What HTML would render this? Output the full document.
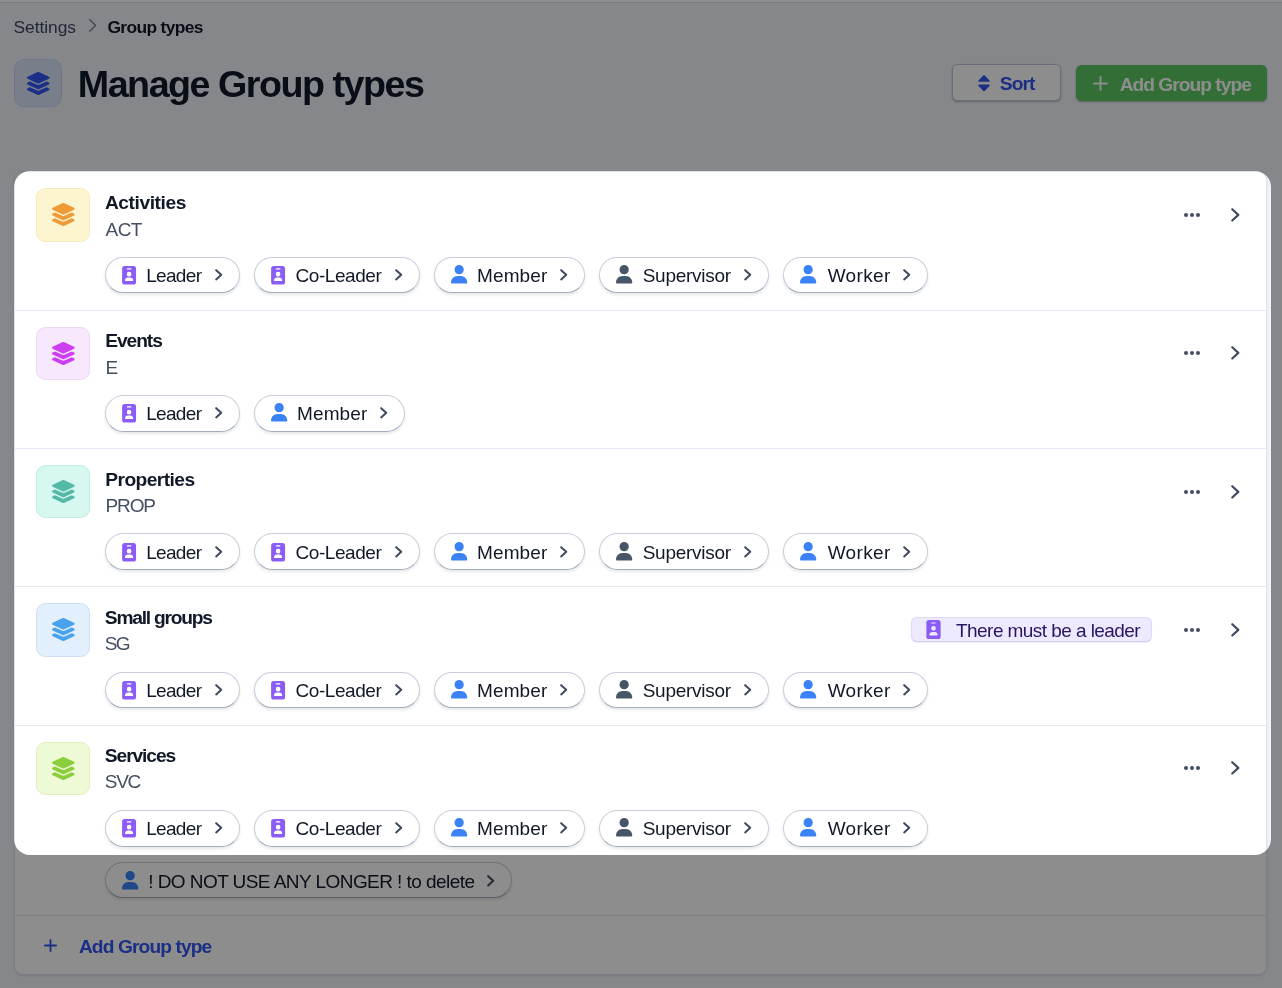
<!DOCTYPE html>
<html lang="en">
<head>
<meta charset="utf-8">
<title>Manage Group types</title>
<style>
*{box-sizing:border-box}
html,body{margin:0;padding:0}
body{width:1282px;height:988px;overflow:hidden;position:relative;background:#f1f4f9;font-family:"Liberation Sans",sans-serif;font-size:19px;line-height:1;color:#111827}
svg{display:block;position:absolute;overflow:visible}
.tx{position:absolute;white-space:nowrap;line-height:1;display:block}
.b{font-weight:700}
.page{position:absolute;left:0;top:0;width:1282px;height:988px;will-change:transform}
.topbar{position:absolute;left:0;top:0;width:1282px;height:3px;background:#fff;border-bottom:1px solid #dde1ea}
.c1{color:#3f4a5f}
.hicon{position:absolute;left:14px;top:59px;width:48px;height:48px;border-radius:10px;background:#dbe6fa;border:1px solid #c8d7f2}
h1{margin:0;font-weight:700;color:#111827}
.btn{position:absolute;border-radius:5.5px;font:inherit;font-weight:700;white-space:nowrap;padding:0;margin:0}
.sort{left:952.3px;top:64.1px;width:108.5px;height:36.9px;background:#fff;border:1px solid #bdc6da;color:#2f55f0;box-shadow:0 1px 2px rgba(0,0,0,.26)}
.add{left:1076px;top:65px;width:191px;height:36.4px;background:#5bc860;border:0;color:#fff;box-shadow:0 1px 2px rgba(0,0,0,.3)}
.card{position:absolute;left:13.5px;top:170.9px;width:1253.75px;height:804.3px;background:#fff;border:1px solid #dfe4ef;border-radius:9px;box-shadow:0 1px 2px rgba(15,23,42,.12)}
.row{position:absolute;left:0;width:100%}
.row+.row{border-top:1px solid #e4e8f2}
.ico{position:absolute;left:21.6px;width:53.6px;height:53.6px;border-radius:9.5px;border:1px solid}
.ico svg{left:14.8px;top:14.1px;width:22.7px;height:23px}
.abbr{color:#434e62}
.pills{position:absolute;left:90.75px;display:flex;gap:14.25px}
.pill{position:relative;height:36px;border:1px solid #c7cddb;border-bottom-color:#a4abbb;border-radius:18.5px;background:#fff;box-shadow:0 2px 3px rgba(30,41,59,.11);flex:none;color:#111827}
.pill svg.bd{left:15.3px;top:7.8px;width:14.2px;height:18.6px}
.pill svg.us{left:15.3px;top:7.5px;width:16.3px;height:18.5px}
.pill svg.cv{width:7.4px;height:11.6px;top:11.4px}
.dots{position:absolute;left:1169.2px;width:17px;height:5px}
.dots i{position:absolute;top:0;width:4.4px;height:4.4px;border-radius:50%;background:#414c63}
.go{left:1216.5px;width:8.6px;height:13.8px}
.badge{position:absolute;left:896.1px;width:241.2px;height:25.3px;border-radius:6px;background:#ede9fe;border:1px solid #dfd8fb;border-bottom-color:#d3caf3;color:#2b1463;box-shadow:0 1px 1px rgba(76,29,149,.08)}
.badge svg{left:14.6px;top:2.3px;width:15px;height:19px}
.foot{position:absolute;left:0;width:100%;height:60px;border-top:1px solid #e3e7f1;color:#2f55f0}
.overlay{position:absolute;left:13.5px;top:171px;width:1257.75px;height:683.5px;border-radius:16px;box-shadow:0 0 0 2000px rgba(0,0,0,.447);pointer-events:none}
</style>
</head>
<body>
<div class="page">
<div class="topbar"></div>
<nav class="crumbs"><span class="tx c1" id="t_crumb1" style="left:13.48px;top:19.30px;font-size:17.4px;letter-spacing:-0.048px">Settings</span><svg class="" style="left:88.7px;top:19px;width:7.3px;height:12.9px" viewBox="0 0 7.3 12.9" fill="none" stroke="#55607a" stroke-width="1.1" stroke-linecap="round" stroke-linejoin="round"><path d="M0.70 0.70 6.60 6.45 0.70 12.20"/></svg><span class="tx b" id="t_crumb2" style="left:107.46px;top:19.30px;font-size:17.4px;letter-spacing:-0.650px">Group types</span></nav>
<div class="hicon"><svg style="left:11.9px;top:12px;width:22.5px;height:23px" viewBox="32 0 512 512" preserveAspectRatio="none"><path fill="#2f55f0" d="M264.500 5.200c14.900-6.900 32.100-6.900 47 0l218.600 101c8.500 3.900 13.900 12.400 13.900 21.800s-5.400 17.900-13.900 21.800l-218.600 101c-14.900 6.900-32.100 6.900-47 0L45.900 149.800C37.400 145.800 32 137.300 32 128s5.400-17.900 13.900-21.800L264.500 5.200zM476.900 209.600l53.200 24.600c8.500 3.900 13.900 12.400 13.900 21.800s-5.400 17.900-13.900 21.800l-218.600 101c-14.900 6.900-32.100 6.900-47 0L45.900 277.800C37.400 273.800 32 265.300 32 256s5.400-17.900 13.900-21.800l53.200-24.600 152 70.200c23.400 10.800 50.400 10.800 73.800 0l152-70.200zm-152 198.200l152-70.200 53.200 24.600c8.500 3.900 13.900 12.400 13.900 21.800s-5.400 17.900-13.900 21.800l-218.600 101c-14.900 6.900-32.100 6.900-47 0L45.900 405.800C37.400 401.800 32 393.300 32 384s5.400-17.900 13.900-21.800l53.200-24.600 152 70.200c23.400 10.800 50.400 10.800 73.800 0z"/></svg></div>
<h1 class="tx" id="t_title" style="left:77.77px;top:66.15px;font-size:37.7px;letter-spacing:-1.503px">Manage Group types</h1>
<button class="btn sort"><svg style="left:24.6px;top:9.6px;width:12px;height:16.5px" viewBox="0 0 12 16.5"><path fill="#2f55f0" d="M5.3 0.500Q6 -0.200 6.700 0.500L11.500 5.400Q12.300 6.500 11 6.700H1Q-0.300 6.500 0.500 5.400ZM5.300 16Q6 16.700 6.700 16L11.500 10.900Q12.300 9.800 11 9.600H1Q-0.300 9.800 0.500 10.900Z"/></svg><span class="tx" id="t_sort" style="left:46.54px;top:8.80px;font-size:19.2px;letter-spacing:-0.941px">Sort</span></button>
<button class="btn add"><svg style="left:17px;top:10.5px;width:15px;height:15px" viewBox="0 0 15 15" fill="none" stroke="#fff" stroke-width="1.9" stroke-linecap="round"><path d="M7.5 1V14M1 7.500H14"/></svg><span class="tx" id="t_addbtn" style="left:43.65px;top:9.90px;font-size:19.2px;letter-spacing:-0.981px">Add Group type</span></button>
<main class="card">
<section class="row" style="top:0.10px;height:138px">
<div class="ico" style="top:16px;height:54px;background:#fdf5d0;border-color:#f4eabb"><svg viewBox="32 0 512 512" preserveAspectRatio="none"><path fill="#ee9b37" d="M264.500 5.200c14.900-6.900 32.100-6.900 47 0l218.600 101c8.500 3.900 13.900 12.400 13.900 21.800s-5.400 17.900-13.900 21.800l-218.600 101c-14.900 6.900-32.100 6.900-47 0L45.900 149.800C37.400 145.800 32 137.300 32 128s5.400-17.900 13.900-21.800L264.500 5.200zM476.900 209.600l53.200 24.600c8.500 3.900 13.900 12.400 13.900 21.800s-5.400 17.900-13.900 21.800l-218.600 101c-14.900 6.900-32.100 6.900-47 0L45.900 277.800C37.400 273.800 32 265.300 32 256s5.400-17.900 13.900-21.800l53.200-24.600 152 70.200c23.400 10.800 50.400 10.800 73.800 0l152-70.200zm-152 198.200l152-70.200 53.200 24.600c8.500 3.900 13.900 12.400 13.900 21.800s-5.400 17.900-13.900 21.800l-218.600 101c-14.900 6.900-32.100 6.900-47 0L45.900 405.800C37.400 401.800 32 393.300 32 384s5.400-17.900 13.900-21.800l53.200-24.600 152 70.200c23.400 10.800 50.400 10.800 73.800 0z"/></svg></div>
<div class="tx b" id="t_n1" style="left:90.41px;top:20.90px;font-size:19.2px;letter-spacing:-0.432px">Activities</div>
<div class="tx abbr" id="t_a1" style="left:91.12px;top:48.00px;font-size:19.0px;letter-spacing:-0.567px">ACT</div>
<div class="dots" style="top:40.80px"><i style="left:0"></i><i style="left:5.95px"></i><i style="left:11.9px"></i></div>
<svg class="go" style="top:36.10px" viewBox="0 0 8.6 13.8" fill="none" stroke="#414c63" stroke-width="2.2" stroke-linecap="round" stroke-linejoin="round"><path d="M1.25 1.25 7.35 6.90 1.25 12.55"/></svg>
<div class="pills" style="top:85px"><a class="pill" style="width:134.75px;height:36px"><svg class="bd" style="margin-top:0px" viewBox="0 0 384 512"><path fill="#8b5cf6" d="M64 0C28.700 0 0 28.700 0 64V448c0 35.300 28.700 64 64 64H320c35.300 0 64-28.700 64-64V64c0-35.300-28.700-64-64-64H64zm96 320h64c44.200 0 80 35.800 80 80c0 8.800-7.200 16-16 16H96c-8.800 0-16-7.200-16-16c0-44.200 35.800-80 80-80zm-32-96a64 64 0 1 1 128 0 64 64 0 1 1 -128 0zM144 64h96c8.800 0 16 7.200 16 16s-7.200 16-16 16H144c-8.800 0-16-7.200-16-16s7.200-16 16-16z"/></svg><span class="tx" id="t_leader" style="left:39.89px;top:8.00px;font-size:19.0px;letter-spacing:-0.654px">Leader</span><svg class="cv" style="left:108.80px;margin-top:0px" viewBox="0 0 7.4 11.6" fill="none" stroke="#3f4a5f" stroke-width="2.0" stroke-linecap="round" stroke-linejoin="round"><path d="M1.15 1.15 6.25 5.80 1.15 10.45"/></svg></a><a class="pill" style="width:165.75px;height:36px"><svg class="bd" style="margin-top:0px" viewBox="0 0 384 512"><path fill="#8b5cf6" d="M64 0C28.700 0 0 28.700 0 64V448c0 35.300 28.700 64 64 64H320c35.300 0 64-28.700 64-64V64c0-35.300-28.700-64-64-64H64zm96 320h64c44.200 0 80 35.800 80 80c0 8.800-7.200 16-16 16H96c-8.800 0-16-7.200-16-16c0-44.200 35.800-80 80-80zm-32-96a64 64 0 1 1 128 0 64 64 0 1 1 -128 0zM144 64h96c8.800 0 16 7.200 16 16s-7.200 16-16 16H144c-8.800 0-16-7.200-16-16s7.200-16 16-16z"/></svg><span class="tx" id="t_coleader" style="left:40.33px;top:8.00px;font-size:19.0px;letter-spacing:-0.443px">Co-Leader</span><svg class="cv" style="left:140.05px;margin-top:0px" viewBox="0 0 7.4 11.6" fill="none" stroke="#3f4a5f" stroke-width="2.0" stroke-linecap="round" stroke-linejoin="round"><path d="M1.15 1.15 6.25 5.80 1.15 10.45"/></svg></a><a class="pill" style="width:150.75px;height:36px"><svg class="us" style="margin-top:0px" viewBox="0 0 448 512"><path fill="#3b82f6" d="M224 256A128 128 0 1 0 224 0a128 128 0 1 0 0 256zm-45.700 48C79.800 304 0 383.800 0 482.300C0 498.700 13.300 512 29.700 512H418.300c16.400 0 29.700-13.300 29.700-29.700C448 383.800 368.200 304 269.700 304H178.300z"/></svg><span class="tx" id="t_member" style="left:41.76px;top:8.00px;font-size:19.0px;letter-spacing:0.123px">Member</span><svg class="cv" style="left:125.05px;margin-top:0px" viewBox="0 0 7.4 11.6" fill="none" stroke="#3f4a5f" stroke-width="2.0" stroke-linecap="round" stroke-linejoin="round"><path d="M1.15 1.15 6.25 5.80 1.15 10.45"/></svg></a><a class="pill" style="width:169.75px;height:36px"><svg class="us" style="margin-top:0px" viewBox="0 0 448 512"><path fill="#475569" d="M224 256A128 128 0 1 0 224 0a128 128 0 1 0 0 256zm-45.700 48C79.800 304 0 383.800 0 482.300C0 498.700 13.300 512 29.700 512H418.300c16.400 0 29.700-13.300 29.700-29.700C448 383.800 368.200 304 269.700 304H178.300z"/></svg><span class="tx" id="t_supervisor" style="left:42.45px;top:8.00px;font-size:19.0px;letter-spacing:-0.258px">Supervisor</span><svg class="cv" style="left:143.40px;margin-top:0px" viewBox="0 0 7.4 11.6" fill="none" stroke="#3f4a5f" stroke-width="2.0" stroke-linecap="round" stroke-linejoin="round"><path d="M1.15 1.15 6.25 5.80 1.15 10.45"/></svg></a><a class="pill" style="width:144.75px;height:36px"><svg class="us" style="margin-top:0px" viewBox="0 0 448 512"><path fill="#3b82f6" d="M224 256A128 128 0 1 0 224 0a128 128 0 1 0 0 256zm-45.700 48C79.800 304 0 383.800 0 482.300C0 498.700 13.300 512 29.700 512H418.300c16.400 0 29.700-13.300 29.700-29.700C448 383.800 368.200 304 269.700 304H178.300z"/></svg><span class="tx" id="t_worker" style="left:43.40px;top:8.00px;font-size:19.0px;letter-spacing:0.340px">Worker</span><svg class="cv" style="left:118.40px;margin-top:0px" viewBox="0 0 7.4 11.6" fill="none" stroke="#3f4a5f" stroke-width="2.0" stroke-linecap="round" stroke-linejoin="round"><path d="M1.15 1.15 6.25 5.80 1.15 10.45"/></svg></a></div>
</section>
<section class="row" style="top:138.10px;height:138px">
<div class="ico" style="top:16px;height:53.5px;background:#f8e8fd;border-color:#ecd7f6"><svg viewBox="32 0 512 512" preserveAspectRatio="none"><path fill="#cd3ef0" d="M264.500 5.200c14.900-6.900 32.100-6.900 47 0l218.600 101c8.500 3.900 13.900 12.400 13.900 21.800s-5.400 17.900-13.900 21.800l-218.600 101c-14.900 6.900-32.100 6.900-47 0L45.900 149.800C37.400 145.800 32 137.300 32 128s5.400-17.900 13.900-21.800L264.500 5.200zM476.900 209.600l53.200 24.600c8.500 3.900 13.900 12.400 13.900 21.800s-5.400 17.900-13.900 21.800l-218.600 101c-14.900 6.900-32.100 6.900-47 0L45.900 277.800C37.400 273.800 32 265.300 32 256s5.400-17.900 13.900-21.800l53.200-24.600 152 70.200c23.400 10.800 50.400 10.800 73.800 0l152-70.200zm-152 198.200l152-70.200 53.200 24.600c8.500 3.900 13.900 12.400 13.900 21.800s-5.400 17.900-13.900 21.800l-218.600 101c-14.900 6.900-32.100 6.900-47 0L45.900 405.800C37.400 401.800 32 393.300 32 384s5.400-17.900 13.900-21.800l53.200-24.600 152 70.200c23.400 10.800 50.400 10.800 73.800 0z"/></svg></div>
<div class="tx b" id="t_n2" style="left:90.79px;top:19.90px;font-size:19.2px;letter-spacing:-1.074px">Events</div>
<div class="tx abbr" id="t_a2" style="left:90.90px;top:47.00px;font-size:19.0px;letter-spacing:-0.400px">E</div>
<div class="dots" style="top:39.80px"><i style="left:0"></i><i style="left:5.95px"></i><i style="left:11.9px"></i></div>
<svg class="go" style="top:35.10px" viewBox="0 0 8.6 13.8" fill="none" stroke="#414c63" stroke-width="2.2" stroke-linecap="round" stroke-linejoin="round"><path d="M1.25 1.25 7.35 6.90 1.25 12.55"/></svg>
<div class="pills" style="top:84px"><a class="pill" style="width:134.75px;height:37px"><svg class="bd" style="margin-top:0px" viewBox="0 0 384 512"><path fill="#8b5cf6" d="M64 0C28.700 0 0 28.700 0 64V448c0 35.300 28.700 64 64 64H320c35.300 0 64-28.700 64-64V64c0-35.300-28.700-64-64-64H64zm96 320h64c44.200 0 80 35.800 80 80c0 8.800-7.200 16-16 16H96c-8.800 0-16-7.200-16-16c0-44.200 35.800-80 80-80zm-32-96a64 64 0 1 1 128 0 64 64 0 1 1 -128 0zM144 64h96c8.800 0 16 7.200 16 16s-7.200 16-16 16H144c-8.800 0-16-7.200-16-16s7.200-16 16-16z"/></svg><span class="tx" style="left:39.89px;top:8.00px;font-size:19.0px;letter-spacing:-0.654px">Leader</span><svg class="cv" style="left:108.80px;margin-top:0px" viewBox="0 0 7.4 11.6" fill="none" stroke="#3f4a5f" stroke-width="2.0" stroke-linecap="round" stroke-linejoin="round"><path d="M1.15 1.15 6.25 5.80 1.15 10.45"/></svg></a><a class="pill" style="width:150.75px;height:37px"><svg class="us" style="margin-top:0px" viewBox="0 0 448 512"><path fill="#3b82f6" d="M224 256A128 128 0 1 0 224 0a128 128 0 1 0 0 256zm-45.700 48C79.800 304 0 383.800 0 482.300C0 498.700 13.300 512 29.700 512H418.300c16.400 0 29.700-13.300 29.700-29.700C448 383.800 368.200 304 269.700 304H178.300z"/></svg><span class="tx" style="left:41.76px;top:8.00px;font-size:19.0px;letter-spacing:0.123px">Member</span><svg class="cv" style="left:125.05px;margin-top:0px" viewBox="0 0 7.4 11.6" fill="none" stroke="#3f4a5f" stroke-width="2.0" stroke-linecap="round" stroke-linejoin="round"><path d="M1.15 1.15 6.25 5.80 1.15 10.45"/></svg></a></div>
</section>
<section class="row" style="top:276.10px;height:138px">
<div class="ico" style="top:16px;height:53.5px;background:#d6f8f0;border-color:#c0ece2"><svg viewBox="32 0 512 512" preserveAspectRatio="none"><path fill="#55b9a8" d="M264.500 5.200c14.900-6.900 32.100-6.900 47 0l218.600 101c8.500 3.900 13.900 12.400 13.900 21.800s-5.400 17.900-13.900 21.800l-218.600 101c-14.900 6.900-32.100 6.900-47 0L45.900 149.800C37.400 145.800 32 137.300 32 128s5.400-17.900 13.900-21.800L264.500 5.200zM476.900 209.600l53.200 24.600c8.500 3.900 13.900 12.400 13.900 21.800s-5.400 17.900-13.900 21.800l-218.600 101c-14.900 6.900-32.100 6.900-47 0L45.900 277.800C37.400 273.800 32 265.300 32 256s5.400-17.900 13.900-21.800l53.200-24.600 152 70.200c23.400 10.800 50.400 10.800 73.800 0l152-70.200zm-152 198.200l152-70.200 53.200 24.600c8.500 3.900 13.900 12.400 13.900 21.800s-5.400 17.900-13.900 21.800l-218.600 101c-14.900 6.900-32.100 6.900-47 0L45.900 405.800C37.400 401.800 32 393.300 32 384s5.400-17.900 13.900-21.800l53.200-24.600 152 70.200c23.400 10.800 50.400 10.800 73.800 0z"/></svg></div>
<div class="tx b" id="t_n3" style="left:90.78px;top:20.90px;font-size:19.2px;letter-spacing:-0.559px">Properties</div>
<div class="tx abbr" id="t_a3" style="left:90.90px;top:47.00px;font-size:19.0px;letter-spacing:-1.075px">PROP</div>
<div class="dots" style="top:40.80px"><i style="left:0"></i><i style="left:5.95px"></i><i style="left:11.9px"></i></div>
<svg class="go" style="top:36.10px" viewBox="0 0 8.6 13.8" fill="none" stroke="#414c63" stroke-width="2.2" stroke-linecap="round" stroke-linejoin="round"><path d="M1.25 1.25 7.35 6.90 1.25 12.55"/></svg>
<div class="pills" style="top:84px"><a class="pill" style="width:134.75px;height:37px"><svg class="bd" style="margin-top:1px" viewBox="0 0 384 512"><path fill="#8b5cf6" d="M64 0C28.700 0 0 28.700 0 64V448c0 35.300 28.700 64 64 64H320c35.300 0 64-28.700 64-64V64c0-35.300-28.700-64-64-64H64zm96 320h64c44.200 0 80 35.800 80 80c0 8.800-7.200 16-16 16H96c-8.800 0-16-7.200-16-16c0-44.200 35.800-80 80-80zm-32-96a64 64 0 1 1 128 0 64 64 0 1 1 -128 0zM144 64h96c8.800 0 16 7.200 16 16s-7.200 16-16 16H144c-8.800 0-16-7.200-16-16s7.200-16 16-16z"/></svg><span class="tx" style="left:39.89px;top:9.00px;font-size:19.0px;letter-spacing:-0.654px">Leader</span><svg class="cv" style="left:108.80px;margin-top:1px" viewBox="0 0 7.4 11.6" fill="none" stroke="#3f4a5f" stroke-width="2.0" stroke-linecap="round" stroke-linejoin="round"><path d="M1.15 1.15 6.25 5.80 1.15 10.45"/></svg></a><a class="pill" style="width:165.75px;height:37px"><svg class="bd" style="margin-top:1px" viewBox="0 0 384 512"><path fill="#8b5cf6" d="M64 0C28.700 0 0 28.700 0 64V448c0 35.300 28.700 64 64 64H320c35.300 0 64-28.700 64-64V64c0-35.300-28.700-64-64-64H64zm96 320h64c44.200 0 80 35.800 80 80c0 8.800-7.200 16-16 16H96c-8.800 0-16-7.200-16-16c0-44.200 35.800-80 80-80zm-32-96a64 64 0 1 1 128 0 64 64 0 1 1 -128 0zM144 64h96c8.800 0 16 7.200 16 16s-7.200 16-16 16H144c-8.800 0-16-7.200-16-16s7.200-16 16-16z"/></svg><span class="tx" style="left:40.33px;top:9.00px;font-size:19.0px;letter-spacing:-0.443px">Co-Leader</span><svg class="cv" style="left:140.05px;margin-top:1px" viewBox="0 0 7.4 11.6" fill="none" stroke="#3f4a5f" stroke-width="2.0" stroke-linecap="round" stroke-linejoin="round"><path d="M1.15 1.15 6.25 5.80 1.15 10.45"/></svg></a><a class="pill" style="width:150.75px;height:37px"><svg class="us" style="margin-top:1px" viewBox="0 0 448 512"><path fill="#3b82f6" d="M224 256A128 128 0 1 0 224 0a128 128 0 1 0 0 256zm-45.700 48C79.800 304 0 383.800 0 482.300C0 498.700 13.300 512 29.700 512H418.300c16.400 0 29.700-13.300 29.700-29.700C448 383.800 368.200 304 269.700 304H178.300z"/></svg><span class="tx" style="left:41.76px;top:9.00px;font-size:19.0px;letter-spacing:0.123px">Member</span><svg class="cv" style="left:125.05px;margin-top:1px" viewBox="0 0 7.4 11.6" fill="none" stroke="#3f4a5f" stroke-width="2.0" stroke-linecap="round" stroke-linejoin="round"><path d="M1.15 1.15 6.25 5.80 1.15 10.45"/></svg></a><a class="pill" style="width:169.75px;height:37px"><svg class="us" style="margin-top:1px" viewBox="0 0 448 512"><path fill="#475569" d="M224 256A128 128 0 1 0 224 0a128 128 0 1 0 0 256zm-45.700 48C79.800 304 0 383.800 0 482.300C0 498.700 13.300 512 29.700 512H418.300c16.400 0 29.700-13.300 29.700-29.700C448 383.800 368.200 304 269.700 304H178.300z"/></svg><span class="tx" style="left:42.45px;top:9.00px;font-size:19.0px;letter-spacing:-0.258px">Supervisor</span><svg class="cv" style="left:143.40px;margin-top:1px" viewBox="0 0 7.4 11.6" fill="none" stroke="#3f4a5f" stroke-width="2.0" stroke-linecap="round" stroke-linejoin="round"><path d="M1.15 1.15 6.25 5.80 1.15 10.45"/></svg></a><a class="pill" style="width:144.75px;height:37px"><svg class="us" style="margin-top:1px" viewBox="0 0 448 512"><path fill="#3b82f6" d="M224 256A128 128 0 1 0 224 0a128 128 0 1 0 0 256zm-45.700 48C79.800 304 0 383.800 0 482.300C0 498.700 13.300 512 29.700 512H418.300c16.400 0 29.700-13.300 29.700-29.700C448 383.800 368.200 304 269.700 304H178.300z"/></svg><span class="tx" style="left:43.40px;top:9.00px;font-size:19.0px;letter-spacing:0.340px">Worker</span><svg class="cv" style="left:118.40px;margin-top:1px" viewBox="0 0 7.4 11.6" fill="none" stroke="#3f4a5f" stroke-width="2.0" stroke-linecap="round" stroke-linejoin="round"><path d="M1.15 1.15 6.25 5.80 1.15 10.45"/></svg></a></div>
</section>
<section class="row" style="top:414.10px;height:139px">
<div class="ico" style="top:16px;height:54px;background:#e1f0fc;border-color:#cadff1"><svg viewBox="32 0 512 512" preserveAspectRatio="none"><path fill="#4aa2ec" d="M264.500 5.200c14.900-6.900 32.100-6.900 47 0l218.600 101c8.500 3.900 13.900 12.400 13.900 21.800s-5.400 17.900-13.900 21.800l-218.600 101c-14.900 6.900-32.100 6.900-47 0L45.900 149.800C37.400 145.800 32 137.300 32 128s5.400-17.900 13.900-21.800L264.500 5.200zM476.900 209.600l53.200 24.600c8.500 3.900 13.900 12.400 13.900 21.800s-5.400 17.900-13.900 21.800l-218.600 101c-14.900 6.900-32.100 6.900-47 0L45.900 277.800C37.400 273.800 32 265.300 32 256s5.400-17.900 13.900-21.800l53.200-24.600 152 70.200c23.400 10.800 50.400 10.800 73.800 0l152-70.200zm-152 198.200l152-70.200 53.200 24.600c8.500 3.900 13.900 12.400 13.900 21.800s-5.400 17.900-13.900 21.800l-218.600 101c-14.900 6.900-32.100 6.900-47 0L45.900 405.800C37.400 401.800 32 393.300 32 384s5.400-17.900 13.900-21.800l53.200-24.600 152 70.200c23.400 10.800 50.400 10.800 73.800 0z"/></svg></div>
<div class="tx b" id="t_n4" style="left:90.36px;top:20.90px;font-size:19.2px;letter-spacing:-1.229px">Small groups</div>
<div class="tx abbr" id="t_a4" style="left:90.25px;top:47.00px;font-size:19.0px;letter-spacing:-1.770px">SG</div>
<div class="badge" style="top:30px"><svg viewBox="0 0 384 512"><path fill="#8b5cf6" d="M64 0C28.700 0 0 28.700 0 64V448c0 35.300 28.700 64 64 64H320c35.300 0 64-28.700 64-64V64c0-35.300-28.700-64-64-64H64zm96 320h64c44.200 0 80 35.800 80 80c0 8.800-7.200 16-16 16H96c-8.800 0-16-7.200-16-16c0-44.200 35.800-80 80-80zm-32-96a64 64 0 1 1 128 0 64 64 0 1 1 -128 0zM144 64h96c8.800 0 16 7.200 16 16s-7.200 16-16 16H144c-8.800 0-16-7.200-16-16s7.200-16 16-16z"/></svg><span class="tx" id="t_badge" style="left:44.47px;top:3.00px;font-size:19.0px;letter-spacing:-0.563px">There must be a leader</span></div>
<div class="dots" style="top:40.80px"><i style="left:0"></i><i style="left:5.95px"></i><i style="left:11.9px"></i></div>
<svg class="go" style="top:36.10px" viewBox="0 0 8.6 13.8" fill="none" stroke="#414c63" stroke-width="2.2" stroke-linecap="round" stroke-linejoin="round"><path d="M1.25 1.25 7.35 6.90 1.25 12.55"/></svg>
<div class="pills" style="top:85px"><a class="pill" style="width:134.75px;height:36px"><svg class="bd" style="margin-top:0px" viewBox="0 0 384 512"><path fill="#8b5cf6" d="M64 0C28.700 0 0 28.700 0 64V448c0 35.300 28.700 64 64 64H320c35.300 0 64-28.700 64-64V64c0-35.300-28.700-64-64-64H64zm96 320h64c44.200 0 80 35.800 80 80c0 8.800-7.200 16-16 16H96c-8.800 0-16-7.200-16-16c0-44.200 35.800-80 80-80zm-32-96a64 64 0 1 1 128 0 64 64 0 1 1 -128 0zM144 64h96c8.800 0 16 7.200 16 16s-7.200 16-16 16H144c-8.800 0-16-7.200-16-16s7.200-16 16-16z"/></svg><span class="tx" style="left:39.89px;top:8.00px;font-size:19.0px;letter-spacing:-0.654px">Leader</span><svg class="cv" style="left:108.80px;margin-top:0px" viewBox="0 0 7.4 11.6" fill="none" stroke="#3f4a5f" stroke-width="2.0" stroke-linecap="round" stroke-linejoin="round"><path d="M1.15 1.15 6.25 5.80 1.15 10.45"/></svg></a><a class="pill" style="width:165.75px;height:36px"><svg class="bd" style="margin-top:0px" viewBox="0 0 384 512"><path fill="#8b5cf6" d="M64 0C28.700 0 0 28.700 0 64V448c0 35.300 28.700 64 64 64H320c35.300 0 64-28.700 64-64V64c0-35.300-28.700-64-64-64H64zm96 320h64c44.200 0 80 35.800 80 80c0 8.800-7.200 16-16 16H96c-8.800 0-16-7.200-16-16c0-44.200 35.800-80 80-80zm-32-96a64 64 0 1 1 128 0 64 64 0 1 1 -128 0zM144 64h96c8.800 0 16 7.200 16 16s-7.200 16-16 16H144c-8.800 0-16-7.200-16-16s7.200-16 16-16z"/></svg><span class="tx" style="left:40.33px;top:8.00px;font-size:19.0px;letter-spacing:-0.443px">Co-Leader</span><svg class="cv" style="left:140.05px;margin-top:0px" viewBox="0 0 7.4 11.6" fill="none" stroke="#3f4a5f" stroke-width="2.0" stroke-linecap="round" stroke-linejoin="round"><path d="M1.15 1.15 6.25 5.80 1.15 10.45"/></svg></a><a class="pill" style="width:150.75px;height:36px"><svg class="us" style="margin-top:0px" viewBox="0 0 448 512"><path fill="#3b82f6" d="M224 256A128 128 0 1 0 224 0a128 128 0 1 0 0 256zm-45.700 48C79.800 304 0 383.800 0 482.300C0 498.700 13.300 512 29.700 512H418.300c16.400 0 29.700-13.300 29.700-29.700C448 383.800 368.200 304 269.700 304H178.300z"/></svg><span class="tx" style="left:41.76px;top:8.00px;font-size:19.0px;letter-spacing:0.123px">Member</span><svg class="cv" style="left:125.05px;margin-top:0px" viewBox="0 0 7.4 11.6" fill="none" stroke="#3f4a5f" stroke-width="2.0" stroke-linecap="round" stroke-linejoin="round"><path d="M1.15 1.15 6.25 5.80 1.15 10.45"/></svg></a><a class="pill" style="width:169.75px;height:36px"><svg class="us" style="margin-top:0px" viewBox="0 0 448 512"><path fill="#475569" d="M224 256A128 128 0 1 0 224 0a128 128 0 1 0 0 256zm-45.700 48C79.800 304 0 383.800 0 482.300C0 498.700 13.300 512 29.700 512H418.300c16.400 0 29.700-13.300 29.700-29.700C448 383.800 368.200 304 269.700 304H178.300z"/></svg><span class="tx" style="left:42.45px;top:8.00px;font-size:19.0px;letter-spacing:-0.258px">Supervisor</span><svg class="cv" style="left:143.40px;margin-top:0px" viewBox="0 0 7.4 11.6" fill="none" stroke="#3f4a5f" stroke-width="2.0" stroke-linecap="round" stroke-linejoin="round"><path d="M1.15 1.15 6.25 5.80 1.15 10.45"/></svg></a><a class="pill" style="width:144.75px;height:36px"><svg class="us" style="margin-top:0px" viewBox="0 0 448 512"><path fill="#3b82f6" d="M224 256A128 128 0 1 0 224 0a128 128 0 1 0 0 256zm-45.700 48C79.800 304 0 383.800 0 482.300C0 498.700 13.300 512 29.700 512H418.300c16.400 0 29.700-13.300 29.700-29.700C448 383.800 368.200 304 269.700 304H178.300z"/></svg><span class="tx" style="left:43.40px;top:8.00px;font-size:19.0px;letter-spacing:0.340px">Worker</span><svg class="cv" style="left:118.40px;margin-top:0px" viewBox="0 0 7.4 11.6" fill="none" stroke="#3f4a5f" stroke-width="2.0" stroke-linecap="round" stroke-linejoin="round"><path d="M1.15 1.15 6.25 5.80 1.15 10.45"/></svg></a></div>
</section>
<section class="row" style="top:553.10px;height:190px">
<div class="ico" style="top:16px;height:53.5px;background:#eefad6;border-color:#dcefbb"><svg viewBox="32 0 512 512" preserveAspectRatio="none"><path fill="#8ccd3e" d="M264.500 5.200c14.900-6.900 32.100-6.900 47 0l218.600 101c8.500 3.900 13.900 12.400 13.900 21.800s-5.400 17.900-13.900 21.800l-218.600 101c-14.900 6.900-32.100 6.900-47 0L45.900 149.800C37.400 145.800 32 137.300 32 128s5.400-17.900 13.900-21.800L264.500 5.200zM476.900 209.600l53.200 24.600c8.500 3.900 13.900 12.400 13.900 21.800s-5.400 17.900-13.900 21.800l-218.600 101c-14.900 6.900-32.100 6.900-47 0L45.900 277.800C37.400 273.800 32 265.300 32 256s5.400-17.900 13.900-21.800l53.200-24.600 152 70.200c23.400 10.800 50.400 10.800 73.800 0l152-70.200zm-152 198.200l152-70.200 53.200 24.600c8.500 3.900 13.900 12.400 13.900 21.800s-5.400 17.900-13.900 21.800l-218.600 101c-14.900 6.900-32.100 6.900-47 0L45.900 405.800C37.400 401.800 32 393.300 32 384s5.400-17.900 13.900-21.800l53.200-24.600 152 70.200c23.400 10.800 50.400 10.800 73.800 0z"/></svg></div>
<div class="tx b" id="t_n5" style="left:90.34px;top:19.90px;font-size:19.2px;letter-spacing:-1.082px">Services</div>
<div class="tx abbr" id="t_a5" style="left:90.25px;top:46.00px;font-size:19.0px;letter-spacing:-1.255px">SVC</div>
<div class="dots" style="top:39.80px"><i style="left:0"></i><i style="left:5.95px"></i><i style="left:11.9px"></i></div>
<svg class="go" style="top:35.10px" viewBox="0 0 8.6 13.8" fill="none" stroke="#414c63" stroke-width="2.2" stroke-linecap="round" stroke-linejoin="round"><path d="M1.25 1.25 7.35 6.90 1.25 12.55"/></svg>
<div class="pills" style="top:84px"><a class="pill" style="width:134.75px;height:37px"><svg class="bd" style="margin-top:0px" viewBox="0 0 384 512"><path fill="#8b5cf6" d="M64 0C28.700 0 0 28.700 0 64V448c0 35.300 28.700 64 64 64H320c35.300 0 64-28.700 64-64V64c0-35.300-28.700-64-64-64H64zm96 320h64c44.200 0 80 35.800 80 80c0 8.800-7.200 16-16 16H96c-8.800 0-16-7.200-16-16c0-44.200 35.800-80 80-80zm-32-96a64 64 0 1 1 128 0 64 64 0 1 1 -128 0zM144 64h96c8.800 0 16 7.200 16 16s-7.200 16-16 16H144c-8.800 0-16-7.200-16-16s7.200-16 16-16z"/></svg><span class="tx" style="left:39.89px;top:8.00px;font-size:19.0px;letter-spacing:-0.654px">Leader</span><svg class="cv" style="left:108.80px;margin-top:0px" viewBox="0 0 7.4 11.6" fill="none" stroke="#3f4a5f" stroke-width="2.0" stroke-linecap="round" stroke-linejoin="round"><path d="M1.15 1.15 6.25 5.80 1.15 10.45"/></svg></a><a class="pill" style="width:165.75px;height:37px"><svg class="bd" style="margin-top:0px" viewBox="0 0 384 512"><path fill="#8b5cf6" d="M64 0C28.700 0 0 28.700 0 64V448c0 35.300 28.700 64 64 64H320c35.300 0 64-28.700 64-64V64c0-35.300-28.700-64-64-64H64zm96 320h64c44.200 0 80 35.800 80 80c0 8.800-7.200 16-16 16H96c-8.800 0-16-7.200-16-16c0-44.200 35.800-80 80-80zm-32-96a64 64 0 1 1 128 0 64 64 0 1 1 -128 0zM144 64h96c8.800 0 16 7.200 16 16s-7.200 16-16 16H144c-8.800 0-16-7.200-16-16s7.200-16 16-16z"/></svg><span class="tx" style="left:40.33px;top:8.00px;font-size:19.0px;letter-spacing:-0.443px">Co-Leader</span><svg class="cv" style="left:140.05px;margin-top:0px" viewBox="0 0 7.4 11.6" fill="none" stroke="#3f4a5f" stroke-width="2.0" stroke-linecap="round" stroke-linejoin="round"><path d="M1.15 1.15 6.25 5.80 1.15 10.45"/></svg></a><a class="pill" style="width:150.75px;height:37px"><svg class="us" style="margin-top:0px" viewBox="0 0 448 512"><path fill="#3b82f6" d="M224 256A128 128 0 1 0 224 0a128 128 0 1 0 0 256zm-45.700 48C79.800 304 0 383.800 0 482.300C0 498.700 13.300 512 29.700 512H418.300c16.400 0 29.700-13.300 29.700-29.700C448 383.800 368.200 304 269.700 304H178.300z"/></svg><span class="tx" style="left:41.76px;top:8.00px;font-size:19.0px;letter-spacing:0.123px">Member</span><svg class="cv" style="left:125.05px;margin-top:0px" viewBox="0 0 7.4 11.6" fill="none" stroke="#3f4a5f" stroke-width="2.0" stroke-linecap="round" stroke-linejoin="round"><path d="M1.15 1.15 6.25 5.80 1.15 10.45"/></svg></a><a class="pill" style="width:169.75px;height:37px"><svg class="us" style="margin-top:0px" viewBox="0 0 448 512"><path fill="#475569" d="M224 256A128 128 0 1 0 224 0a128 128 0 1 0 0 256zm-45.700 48C79.800 304 0 383.800 0 482.300C0 498.700 13.300 512 29.700 512H418.300c16.400 0 29.700-13.300 29.700-29.700C448 383.800 368.200 304 269.700 304H178.300z"/></svg><span class="tx" style="left:42.45px;top:8.00px;font-size:19.0px;letter-spacing:-0.258px">Supervisor</span><svg class="cv" style="left:143.40px;margin-top:0px" viewBox="0 0 7.4 11.6" fill="none" stroke="#3f4a5f" stroke-width="2.0" stroke-linecap="round" stroke-linejoin="round"><path d="M1.15 1.15 6.25 5.80 1.15 10.45"/></svg></a><a class="pill" style="width:144.75px;height:37px"><svg class="us" style="margin-top:0px" viewBox="0 0 448 512"><path fill="#3b82f6" d="M224 256A128 128 0 1 0 224 0a128 128 0 1 0 0 256zm-45.700 48C79.800 304 0 383.800 0 482.300C0 498.700 13.300 512 29.700 512H418.300c16.400 0 29.700-13.300 29.700-29.700C448 383.800 368.200 304 269.700 304H178.300z"/></svg><span class="tx" style="left:43.40px;top:8.00px;font-size:19.0px;letter-spacing:0.340px">Worker</span><svg class="cv" style="left:118.40px;margin-top:0px" viewBox="0 0 7.4 11.6" fill="none" stroke="#3f4a5f" stroke-width="2.0" stroke-linecap="round" stroke-linejoin="round"><path d="M1.15 1.15 6.25 5.80 1.15 10.45"/></svg></a></div>
<div class="pills" style="top:136.5px"><a class="pill" style="width:406.5px;height:36px"><svg class="us" style="margin-top:0.5px" viewBox="0 0 448 512"><path fill="#3b82f6" d="M224 256A128 128 0 1 0 224 0a128 128 0 1 0 0 256zm-45.700 48C79.800 304 0 383.800 0 482.300C0 498.700 13.300 512 29.700 512H418.300c16.400 0 29.700-13.300 29.700-29.700C448 383.800 368.200 304 269.700 304H178.300z"/></svg><span class="tx" id="t_donot" style="left:41.93px;top:8.50px;font-size:19.0px;letter-spacing:-0.552px">! DO NOT USE ANY LONGER ! to delete</span><svg class="cv" style="left:380.90px;margin-top:0.5px" viewBox="0 0 7.4 11.6" fill="none" stroke="#3f4a5f" stroke-width="2.0" stroke-linecap="round" stroke-linejoin="round"><path d="M1.15 1.15 6.25 5.80 1.15 10.45"/></svg></a></div>
</section>
<div class="foot" style="top:743.10px"><svg style="left:29px;top:23px;width:13px;height:13px" viewBox="0 0 13 13" fill="none" stroke="#2f55f0" stroke-width="1.8" stroke-linecap="round"><path d="M6.5 0.900V12.100M0.900 6.500H12.100"/></svg><span class="tx b" id="t_addlink" style="left:64.41px;top:20.90px;font-size:19.2px;letter-spacing:-0.895px">Add Group type</span></div>
</main>
</div>
<div class="overlay"></div>
</body>
</html>
